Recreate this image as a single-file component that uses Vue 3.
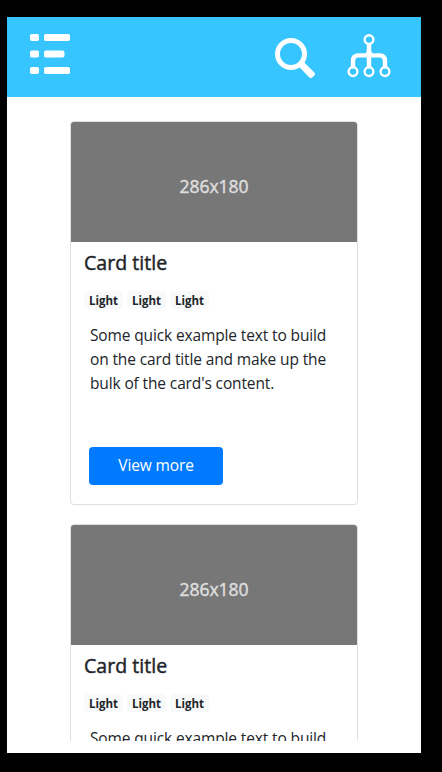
<script setup>
const cards = [1, 2]
const badges = ['Light', 'Light', 'Light']
</script>

<template>
  <div class="frame">
    <div class="screen">
      <header class="bar">
        <svg class="menu" width="40" height="40" viewBox="0 0 40 40" fill="#fff">
          <rect x="0" y="0" width="9" height="7" rx="1.8" />
          <rect x="14" y="0" width="26" height="7" rx="1.8" />
          <rect x="0" y="16.6" width="9" height="7" rx="1.8" />
          <rect x="14" y="16.6" width="20.5" height="7" rx="1.8" />
          <rect x="0" y="33" width="9" height="7" rx="1.8" />
          <rect x="14" y="33" width="26" height="7" rx="1.8" />
        </svg>
        <div class="actions">
          <svg width="40" height="40" viewBox="0 0 40 40">
            <circle cx="16" cy="16" r="13.5" fill="none" stroke="#fff" stroke-width="5" />
            <path d="M29 24.2 L39.4 34.4 Q40.6 35.8 39.4 37.2 L37.2 39.4 Q35.8 40.6 34.4 39.4 L24.2 29 L24 25 Z" fill="#fff" />
          </svg>
          <svg width="44" height="44" viewBox="0 0 44 44" fill="none" stroke="#fff">
            <path d="M22 10 V33 M6 33 V27 Q6 21.4 11.6 21.4 H32.4 Q38 21.4 38 27 V33" stroke-width="4.4" />
            <path d="M19.9 16 Q19.9 19.5 16 19.5 H28 Q24.1 19.5 24.1 16 Z" fill="#fff" stroke="none" />
            <g fill="#36c5ff" stroke-width="2.4">
              <circle cx="22" cy="5.6" r="4.4" />
              <circle cx="6" cy="37.6" r="4.4" />
              <circle cx="22" cy="37.6" r="4.4" />
              <circle cx="38" cy="37.6" r="4.4" />
            </g>
          </svg>
        </div>
      </header>
      <main class="list">
        <article v-for="card in cards" :key="card" class="card">
          <div class="image">286x180</div>
          <div class="body">
            <h5 class="title">Card title</h5>
            <div class="badges">
              <span v-for="(badge, i) in badges" :key="i" class="badge">{{ badge }}</span>
            </div>
            <p class="text">Some quick example text to build<br />on the card title and make up the<br />bulk of the card's content.</p>
            <button class="more" type="button">View more</button>
          </div>
        </article>
      </main>
    </div>
  </div>
</template>

<style>
body {
  background: #000;
  overflow: hidden;
}
</style>

<style scoped>
.frame {
  box-sizing: border-box;
  height: 772px;
  padding: 17px 21px 19px 7px;
  background: #000;
  font-family: "Open Sans", "Noto Sans", sans-serif;
  color: #212529;
}
.screen {
  display: flex;
  flex-direction: column;
  box-sizing: border-box;
  height: 736px;
  padding-bottom: 12px;
  background: #fff;
}
.bar {
  display: flex;
  flex: none;
  justify-content: space-between;
  align-items: flex-start;
  box-sizing: border-box;
  height: 80px;
  padding: 17px 30px 0 23px;
  background: #36c5ff;
}
.bar svg {
  display: block;
}
.actions {
  display: flex;
  gap: 32px;
  align-items: flex-end;
}
.list {
  display: flex;
  flex: 1;
  flex-direction: column;
  gap: 19px;
  min-height: 0;
  overflow: hidden;
  padding: 24px 63px 0;
}
.card {
  flex: none;
  box-sizing: border-box;
  height: 384px;
  border: 1px solid #dfdfdf;
  border-radius: 4px;
  overflow: hidden;
}
.image {
  display: flex;
  justify-content: center;
  height: 120px;
  background: #777;
  color: #dedede;
  font-size: 17.5px;
  line-height: 129px;
  -webkit-text-stroke: 0.45px currentColor;
}
.body {
  display: flex;
  flex-direction: column;
  align-items: flex-start;
  padding: 9px 13px 0;
}
.title {
  margin: 0;
  font-size: 19.5px;
  font-weight: 400;
  line-height: 24px;
  letter-spacing: 0.05px;
  -webkit-text-stroke: 0.45px currentColor;
}
.badges {
  display: flex;
  gap: 4px;
  margin-top: 16px;
}
.badge {
  box-sizing: border-box;
  width: 39px;
  height: 18px;
  border-radius: 4px;
  background: #f8f9fa;
  font-size: 11.5px;
  font-weight: 700;
  line-height: 20px;
  text-align: center;
}
.text {
  margin: 14px 0 0 6px;
  font-size: 15.5px;
  line-height: 24px;
  letter-spacing: -0.13px;
  white-space: nowrap;
}
.more {
  width: 134px;
  height: 38px;
  margin: 52px 0 0 5px;
  padding: 0 0 2px;
  border: 0;
  border-radius: 4px;
  background: #007bff;
  color: #fff;
  font-family: inherit;
  font-size: 15.5px;
  letter-spacing: -0.13px;
  line-height: 36px;
}
</style>
